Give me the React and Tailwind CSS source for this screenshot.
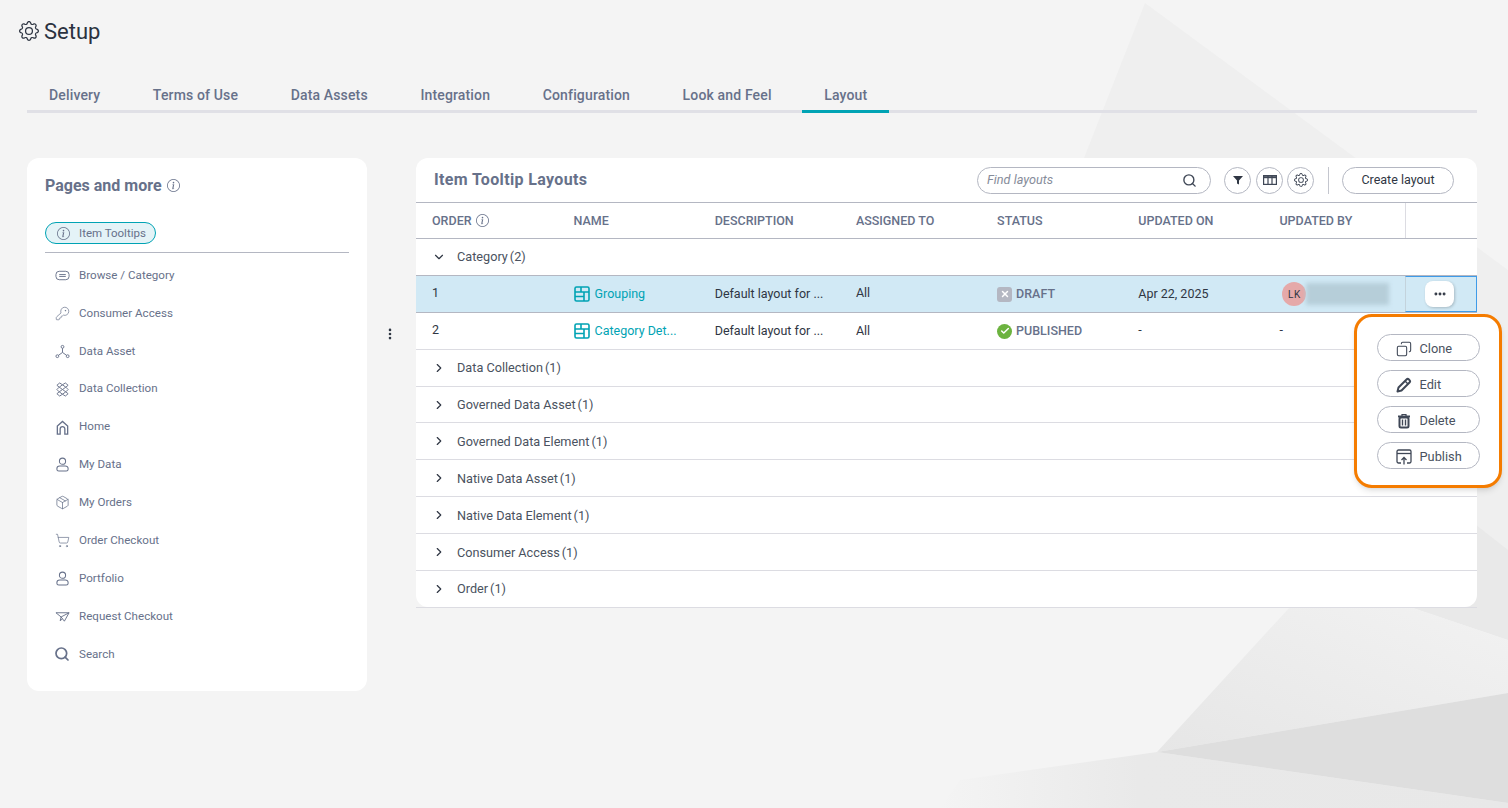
import React from 'react';
import { Copy, ChevronDown, ChevronRight, Search, ShoppingCart, KeyRound, Package, Ellipsis, MoreVertical, Check, X } from 'lucide-react';
import { BsGear, BsInfoCircle } from 'react-icons/bs';

const tabs = ['Delivery', 'Terms of Use', 'Data Assets', 'Integration', 'Configuration', 'Look and Feel', 'Layout'];

function BrowseIcon() {
  return (
    <svg viewBox="0 0 16 16" className="w-[15px] h-[15px]" fill="none" stroke="currentColor" strokeWidth="1">
      <rect x="1" y="3.5" width="14" height="9" rx="3.5" />
      <path d="M4.5 7h7M4.5 9h7" />
    </svg>
  );
}

function AssetIcon() {
  return (
    <svg viewBox="0 0 16 16" className="w-[15px] h-[15px]" fill="none" stroke="currentColor" strokeWidth="1">
      <circle cx="8" cy="3" r="1.5" />
      <circle cx="2.5" cy="13" r="1.5" />
      <circle cx="13.5" cy="13" r="1.5" />
      <path d="M8 4.5V9M8 9l-4.2 3M8 9l4.2 3" />
    </svg>
  );
}

function CollectionIcon() {
  return (
    <svg viewBox="0 0 16 16" className="w-[15px] h-[15px]" fill="none" stroke="currentColor" strokeWidth="1">
      <path d="M2 3.5 5 1 8 3 11 1 14 3.5 11.5 5.5 14 8 11.5 10.5 14 12.5 11 15 8 13 5 15 2 12.5 4.5 10.5 2 8 4.5 5.5Z" />
      <path d="M4.5 5.5 8 3 11.5 5.5 8 8ZM4.5 10.5 8 8 11.5 10.5 8 13Z" />
    </svg>
  );
}

function HomeIcon() {
  return (
    <svg viewBox="0 0 16 16" className="w-[15px] h-[15px]" fill="none" stroke="currentColor" strokeWidth="1.4">
      <path d="M2.5 15V6.5L8 1.5l5.5 5V15h-3V9.5a2.5 2.5 0 0 0-5 0V15Z" />
    </svg>
  );
}

function PersonIcon() {
  return (
    <svg viewBox="0 0 16 16" className="w-[15px] h-[15px]" fill="none" stroke="currentColor" strokeWidth="1.1">
      <circle cx="8" cy="4.5" r="3.3" />
      <path d="M5 9.5h6a3 3 0 0 1 3 3v.5a2 2 0 0 1-2 2H4a2 2 0 0 1-2-2v-.5a3 3 0 0 1 3-3Z" />
    </svg>
  );
}

function PlaneIcon() {
  return (
    <svg viewBox="0 0 16 16" className="w-[15px] h-[15px]" fill="none" stroke="currentColor" strokeWidth="1">
      <path d="M1 4h14L10 13 6.5 8.5 1 4ZM15 4 6.5 8.5 5.5 12.5 8 10.5" />
    </svg>
  );
}

function LayoutIcon() {
  return (
    <svg viewBox="0 0 16 16" className="w-4 h-4 shrink-0" fill="none" stroke="#00a3b4" strokeWidth="1.6">
      <rect x="1" y="1" width="14" height="14" rx="1.5" />
      <path d="M1 6h14M7 1v5M1 10.5h9M10 6v9" />
    </svg>
  );
}

function ColumnsIcon() {
  return (
    <svg viewBox="0 0 14 10" className="w-[14px] h-[10px]" fill="none" stroke="#3f4756" strokeWidth="1.2">
      <rect x="0.6" y="0.6" width="12.8" height="8.8" />
      <path d="M0.6 2.2h12.8" strokeWidth="2" />
      <path d="M5 1v8M9 1v8" />
    </svg>
  );
}

function PencilIcon() {
  return (
    <svg viewBox="0 0 16 16" className="w-4 h-4" fill="none" stroke="#3f4756" strokeWidth="2" strokeLinejoin="round">
      <path d="M1.5 14.5 2.5 10.5 10.5 2.5a1.7 1.7 0 0 1 2.4 0l.6.6a1.7 1.7 0 0 1 0 2.4L5.5 13.5Z" />
      <path d="M9 4l3 3" strokeWidth="1.4" />
    </svg>
  );
}

function TrashIcon() {
  return (
    <svg viewBox="0 0 16 16" className="w-4 h-4" fill="none" stroke="#3f4756" strokeWidth="2">
      <path d="M2 3.5h12" />
      <path d="M6 3V1.5h4V3" strokeWidth="1.2" />
      <rect x="3.5" y="4.5" width="9" height="10" rx="1.5" />
      <path d="M6.5 6.5v6M9.5 6.5v6" strokeWidth="1.4" />
    </svg>
  );
}

function PublishIcon() {
  return (
    <svg viewBox="0 0 16 16" className="w-4 h-4" fill="none" stroke="#3f4756" strokeWidth="1.3">
      <path d="M5 14H2.5A1.5 1.5 0 0 1 1 12.5v-10A1.5 1.5 0 0 1 2.5 1h11A1.5 1.5 0 0 1 15 2.5v10a1.5 1.5 0 0 1-1.5 1.5H11" />
      <path d="M1 4.5h14" />
      <path d="M8 15.5V8.5M5.5 11 8 8.5l2.5 2.5" />
    </svg>
  );
}

const pages = [
  { label: 'Browse / Category', icon: <BrowseIcon /> },
  { label: 'Consumer Access', icon: <KeyRound className="w-[15px] h-[15px]" strokeWidth={1.1} /> },
  { label: 'Data Asset', icon: <AssetIcon /> },
  { label: 'Data Collection', icon: <CollectionIcon /> },
  { label: 'Home', icon: <HomeIcon /> },
  { label: 'My Data', icon: <PersonIcon /> },
  { label: 'My Orders', icon: <Package className="w-[15px] h-[15px]" strokeWidth={1.2} /> },
  { label: 'Order Checkout', icon: <ShoppingCart className="w-[15px] h-[15px]" strokeWidth={1.1} /> },
  { label: 'Portfolio', icon: <PersonIcon /> },
  { label: 'Request Checkout', icon: <PlaneIcon /> },
  { label: 'Search', icon: <Search className="w-4 h-4" strokeWidth={2.6} /> },
];

const columns = [
  { label: 'NAME', w: 'w-[141.2px]' },
  { label: 'DESCRIPTION', w: 'w-[141.2px]' },
  { label: 'ASSIGNED TO', w: 'w-[141.2px]' },
  { label: 'STATUS', w: 'w-[141.2px]' },
  { label: 'UPDATED ON', w: 'w-[141.2px]' },
  { label: 'UPDATED BY', w: 'w-[126px]' },
];

const groups = [
  ['Data Collection', 1],
  ['Governed Data Asset', 1],
  ['Governed Data Element', 1],
  ['Native Data Asset', 1],
  ['Native Data Element', 1],
  ['Consumer Access', 1],
  ['Order', 1],
];

const actions = [
  { label: 'Clone', icon: <Copy className="w-4 h-4 -scale-x-100" strokeWidth={1.6} color="#3f4756" /> },
  { label: 'Edit', icon: <PencilIcon /> },
  { label: 'Delete', icon: <TrashIcon /> },
  { label: 'Publish', icon: <PublishIcon /> },
];

function GroupRow({ name, count, open }) {
  return (
    <div className={`h-[36.9px] flex items-center pl-[16px] border-b text-[12.7px] text-[#4a5260] ${open ? 'border-[#b4b7c2]' : 'border-[#dcdce2]'}`}>
      {open ? <ChevronDown className="w-3.5 h-3.5 text-[#2f3643]" /> : <ChevronRight className="w-3.5 h-3.5 text-[#2f3643]" />}
      <span className="ml-[11px]">{name}</span>
      <span className="ml-[2px]">({count})</span>
    </div>
  );
}

function Cell({ children, className = '', width = 'w-[141.2px]' }) {
  return <div className={`${width} shrink-0 flex items-center ${className}`}>{children}</div>;
}

export default function App() {
  return (
    <div className="relative w-[1508px] h-[808px] overflow-hidden bg-[#f4f4f4] font-['Roboto',sans-serif]">
      {/* background shapes */}
      <svg className="absolute inset-0 w-full h-full" viewBox="0 0 1508 808">
        <defs>
          <linearGradient id="upper" x1="0" y1="1" x2="1" y2="0">
            <stop offset="0" stopColor="#e6e6e6" />
            <stop offset="1" stopColor="#f2f2f2" />
          </linearGradient>
          <linearGradient id="lower" x1="0" y1="0" x2="1" y2="0">
            <stop offset="0" stopColor="#f4f4f4" />
            <stop offset="0.35" stopColor="#e9e9e9" />
            <stop offset="1" stopColor="#e8e8e8" />
          </linearGradient>
        </defs>
        <polygon points="1145,3 1508,270 1508,640 1410,607 1000,500 1084,158" fill="#efefef" />
        <polygon points="1380,450 1508,550 1508,640 1410,607" fill="#e9e9e9" />
        <polygon points="1290,607 1157,752 1508,693 1508,640 1410,607" fill="url(#upper)" />
        <polygon points="960,780 1157,752 1508,803 1508,808 940,808" fill="url(#lower)" />
        <polygon points="1157,752 1508,693 1508,803" fill="#dedede" />
      </svg>

      <div className="relative flex flex-col">
        <div className="h-[62px] pl-[19px] pt-[19px] flex items-start gap-[5px]">
          <BsGear className="w-[20px] h-[20px] mt-[2px] text-[#2f3643]" />
          <span className="text-[22px] leading-[26px] text-[#2b3240]">Setup</span>
        </div>

        <div className="ml-[27px] mr-[31px] mt-[15px] h-[36px] border-b-[3px] border-[#e0e0e6] flex gap-[8.6px]">
          {tabs.map((tab) => (
            <div
              key={tab}
              className={`h-[36px] px-[22px] pt-[9px] text-[14px] leading-[18px] font-medium tracking-[0.15px] text-[#67718a] ${tab === 'Layout' ? 'border-b-[3px] border-[#00a3b4]' : ''}`}
            >
              {tab}
            </div>
          ))}
        </div>

        <div className="mt-[45px] ml-[27px] flex items-start">
          {/* left panel */}
          <div className="w-[340px] h-[533px] bg-white rounded-[12px] px-[18px] pt-[18px]">
            <div className="flex items-center gap-[5px] h-[19px]">
              <span className="text-[16px] font-bold text-[#67718a]">Pages and more</span>
              <BsInfoCircle className="w-[13px] h-[13px] text-[#67718a]" />
            </div>
            <div className="mt-[27px] pb-[8px] border-b border-[#b4b7c2]">
              <div className="flex items-center h-[22px] w-[111px] rounded-full border border-[#00a3b4] bg-[#e4f3f7] pl-[11px] pt-px text-[11.5px] text-[#67718a]">
                <BsInfoCircle className="w-[13px] h-[13px] mr-[9px]" />
                Item Tooltips
              </div>
            </div>
            <div className="mt-[3.5px]">
              {pages.map((p) => (
                <div key={p.label} className="h-[37.9px] flex items-center pl-[9px] text-[11.6px] text-[#67718a]">
                  <span className="w-[16px] flex justify-center">{p.icon}</span>
                  <span className="ml-[9px]">{p.label}</span>
                </div>
              ))}
            </div>
          </div>

          {/* drag handle */}
          <div className="w-[49px] h-[352px] pr-[4px] flex items-center justify-center">
            <MoreVertical className="w-[14px] h-[14px] text-[#2f3643]" strokeWidth={2.5} />
          </div>

          {/* right panel */}
          <div className="relative w-[1061px] h-[449px] bg-white rounded-[12px]">
            <div className="h-[45px] flex items-center pl-[18px] pr-[23px] border-b border-[#b4b7c2]">
              <span className="text-[16px] font-bold tracking-[0.35px] text-[#67718a]">Item Tooltip Layouts</span>
              <div className="ml-auto w-[234px] h-[27px] rounded-full border border-[#b4b7c2] flex items-center pl-[9px] pr-[13px]">
                <span className="text-[12.7px] italic text-[#868c9a]">Find layouts</span>
                <Search className="ml-auto w-[15px] h-[15px] text-[#3f4756]" strokeWidth={2.2} />
              </div>
              <div className="ml-[13px] w-[27px] h-[27px] rounded-full border border-[#b4b7c2] flex items-center justify-center">
                <svg viewBox="0 0 10 10" className="w-[10px] h-[10px]" fill="#2f3643"><path d="M0 1h10L6 5.5V9.5L4 8.5V5.5Z" /></svg>
              </div>
              <div className="ml-[5px] w-[27px] h-[27px] rounded-full border border-[#b4b7c2] flex items-center justify-center">
                <ColumnsIcon />
              </div>
              <div className="ml-[4px] w-[27px] h-[27px] rounded-full border border-[#b4b7c2] flex items-center justify-center">
                <BsGear className="w-[14px] h-[14px] text-[#3f4756]" />
              </div>
              <div className="ml-[14px] w-px h-[27px] bg-[#c4c6ce]" />
              <div className="ml-[13px] w-[112px] h-[27px] rounded-full border border-[#b4b7c2] pt-px flex items-center justify-center text-[12.5px] text-[#2f3643]">
                Create layout
              </div>
            </div>

            {/* header */}
            <div className="h-[36px] flex border-b border-[#b4b7c2] text-[12.5px] font-medium text-[#67718a]">
              <div className="w-[157.5px] shrink-0 pl-[16px] pt-px flex items-center gap-[4px]">
                ORDER <BsInfoCircle className="w-[13px] h-[13px] -mt-[2px]" />
              </div>
              {columns.map((c) => (
                <Cell key={c.label} width={c.w} className="pt-px">{c.label}</Cell>
              ))}
              <div className="flex-1 border-l border-[#dcdce2]" />
            </div>

            <GroupRow name="Category" count={2} open />

            {/* selected row */}
            <div className="h-[36.9px] flex border-b border-[#b4b7c2] bg-[#d1e9f5] text-[12.5px] text-[#2f3643]">
              <div className="w-[157.5px] shrink-0 pl-[16px] flex items-center">1</div>
              <Cell className="text-[#00a3b4] gap-[5px] pt-px"><LayoutIcon />Grouping</Cell>
              <Cell className="pt-px">Default layout for ...</Cell>
              <Cell>All</Cell>
              <Cell className="gap-[4px] pt-px font-medium text-[#67718a]">
                <span className="w-[15px] h-[15px] rounded-[3px] bg-[#b4b7c2] flex items-center justify-center">
                  <X className="w-[10px] h-[10px] text-white" strokeWidth={3.5} />
                </span>
                DRAFT
              </Cell>
              <Cell className="pt-px">Apr 22, 2025</Cell>
              <Cell width="w-[126px]" className="pl-[3px] pt-px">
                <span className="w-[24px] h-[24px] shrink-0 rounded-full bg-[#e5a9a9] flex items-center justify-center text-[10px] tracking-[0.5px]">LK</span>
                <span className="w-[83px] h-[22px] bg-[#b6ced9] blur-[2px]" />
              </Cell>
              <div className="flex-1 flex items-center justify-center pr-[3px] border-y border-r border-[#3f9be8] border-l-[#c3d3dc] border-l bg-[#d1e9f5]">
                <span className="w-[29px] h-[26px] rounded-[8px] bg-white shadow-[1px_1px_3px_rgba(0,0,0,0.2)] flex items-center justify-center">
                  <Ellipsis className="w-[14px] h-[14px] text-[#2f3643]" strokeWidth={3} />
                </span>
              </div>
            </div>

            {/* second row */}
            <div className="h-[36.9px] flex border-b border-[#dcdce2] text-[12.5px] text-[#2f3643]">
              <div className="w-[157.5px] shrink-0 pl-[16px] flex items-center">2</div>
              <Cell className="text-[#00a3b4] gap-[5px] pt-px"><LayoutIcon />Category Det...</Cell>
              <Cell className="pt-px">Default layout for ...</Cell>
              <Cell className="pt-px">All</Cell>
              <Cell className="gap-[4px] pt-px font-medium text-[#67718a]">
                <span className="w-[15px] h-[15px] rounded-full bg-[#6cb33f] flex items-center justify-center">
                  <Check className="w-[10px] h-[10px] text-white" strokeWidth={3.5} />
                </span>
                PUBLISHED
              </Cell>
              <Cell>-</Cell>
              <Cell width="w-[126px]">-</Cell>
            </div>

            {groups.map(([name, count]) => (
              <GroupRow key={name} name={name} count={count} />
            ))}

            {/* actions popover */}
            <div className="absolute left-[938px] top-[156px] w-[148px] h-[174px] rounded-[18px] border-[3px] border-[#f57c00] bg-white shadow-md flex flex-col items-center pt-[17px] gap-[9px]">
              {actions.map((a) => (
                <div key={a.label} className="w-[103px] h-[27px] shrink-0 rounded-full border border-[#b4b7c2] bg-white flex items-center pl-[18px] pt-[2px] text-[12.8px] text-[#4a5260]">
                  <span className="w-[16px] flex justify-center">{a.icon}</span>
                  <span className="ml-[8px]">{a.label}</span>
                </div>
              ))}
            </div>
          </div>
        </div>
      </div>
    </div>
  );
}
